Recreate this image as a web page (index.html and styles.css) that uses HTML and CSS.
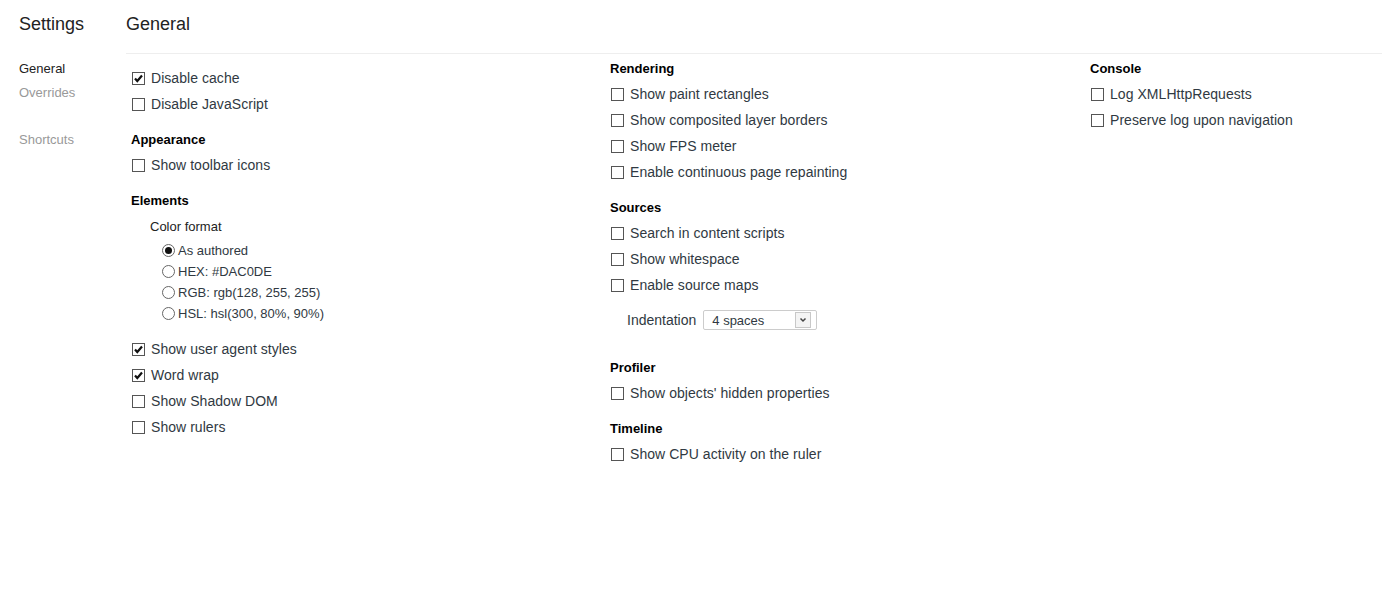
FILE: index.html
```html
<!DOCTYPE html>
<html>
<head>
<meta charset="utf-8">
<link rel="stylesheet" href="styles.css">
</head>
<body>
<div class="page">
  <aside class="sidebar">
    <h1 class="title">Settings</h1>
    <nav class="nav">
      <div class="nav-item active">General</div>
      <div class="nav-item">Overrides</div>
      <div class="nav-item nav-sep">Shortcuts</div>
    </nav>
  </aside>
  <main class="main">
    <h1 class="title main-title">General</h1>
    <div class="columns">
      <div class="col">
        <section class="section first">
          <label class="row"><span class="cb checked"><svg viewBox="0 0 11 11"><path d="M2 5.5 L4.3 8 L9 2.5" /></svg></span>Disable cache</label>
          <label class="row"><span class="cb"></span>Disable JavaScript</label>
        </section>
        <section class="section">
          <div class="head">Appearance</div>
          <label class="row"><span class="cb"></span>Show toolbar icons</label>
        </section>
        <section class="section">
          <div class="head">Elements</div>
          <div class="sub">Color format</div>
          <div class="radios">
            <label class="radio"><span class="rb checked"></span>As authored</label>
            <label class="radio"><span class="rb"></span>HEX: #DAC0DE</label>
            <label class="radio"><span class="rb"></span>RGB: rgb(128, 255, 255)</label>
            <label class="radio"><span class="rb"></span>HSL: hsl(300, 80%, 90%)</label>
          </div>
          <label class="row"><span class="cb checked"><svg viewBox="0 0 11 11"><path d="M2 5.5 L4.3 8 L9 2.5" /></svg></span>Show user agent styles</label>
          <label class="row"><span class="cb checked"><svg viewBox="0 0 11 11"><path d="M2 5.5 L4.3 8 L9 2.5" /></svg></span>Word wrap</label>
          <label class="row"><span class="cb"></span>Show Shadow DOM</label>
          <label class="row"><span class="cb"></span>Show rulers</label>
        </section>
      </div>
      <div class="col">
        <section class="section">
          <div class="head">Rendering</div>
          <label class="row"><span class="cb"></span>Show paint rectangles</label>
          <label class="row"><span class="cb"></span>Show composited layer borders</label>
          <label class="row"><span class="cb"></span>Show FPS meter</label>
          <label class="row"><span class="cb"></span>Enable continuous page repainting</label>
        </section>
        <section class="section">
          <div class="head">Sources</div>
          <label class="row"><span class="cb"></span>Search in content scripts</label>
          <label class="row"><span class="cb"></span>Show whitespace</label>
          <label class="row"><span class="cb"></span>Enable source maps</label>
          <div class="select-row">
            <span class="select-label">Indentation</span>
            <span class="select"><span class="select-value">4 spaces</span><span class="select-arrow"><svg viewBox="0 0 8 6"><path d="M1.5 1.5 L4 4 L6.5 1.5" /></svg></span></span>
          </div>
        </section>
        <section class="section">
          <div class="head">Profiler</div>
          <label class="row"><span class="cb"></span>Show objects' hidden properties</label>
        </section>
        <section class="section">
          <div class="head">Timeline</div>
          <label class="row"><span class="cb"></span>Show CPU activity on the ruler</label>
        </section>
      </div>
      <div class="col">
        <section class="section">
          <div class="head">Console</div>
          <label class="row"><span class="cb"></span>Log XMLHttpRequests</label>
          <label class="row"><span class="cb"></span>Preserve log upon navigation</label>
        </section>
      </div>
    </div>
  </main>
</div>
</body>
</html>
```

FILE: styles.css
```css
* { box-sizing: border-box; }
html, body { margin: 0; padding: 0; background: #fff; }
body {
  font-family: "Liberation Sans", Arial, sans-serif;
  color: #303942;
  font-size: 14px;
}
.page {
  display: flex;
  width: 1382px;
  min-height: 606px;
}
.sidebar {
  width: 126px;
  flex: none;
  padding-left: 19px;
}
.title {
  margin: 0;
  font-size: 18px;
  font-weight: normal;
  line-height: 22px;
  padding-top: 13px;
  color: #222;
}
.nav {
  padding-top: 22px;
}
.nav-item {
  font-size: 13px;
  line-height: 24px;
  color: #999;
}
.nav-item.active { color: #222; }
.nav-sep { margin-top: 23px; }

.main {
  flex: 1;
  min-width: 0;
}
.main-title {
  height: 54px;
  border-bottom: 1px solid #eee;
}
.columns {
  display: grid;
  grid-template-columns: 479px 480px 1fr;
  padding-left: 5px;
  padding-top: 1px;
}
.section {
  margin-bottom: 9px;
}
.section.first { padding-top: 10px; }
.head {
  font-weight: bold;
  font-size: 13px;
  line-height: 24px;
  padding-top: 2px;
  color: #000;
}
.row {
  display: flex;
  align-items: center;
  height: 26px;
  line-height: 26px;
  letter-spacing: 0.05px;
  padding-left: 1px;
}
.cb {
  width: 13px;
  height: 13px;
  border: 1px solid #555;
  background: #fff;
  margin-right: 6px;
  flex: none;
  display: flex;
  align-items: center;
  justify-content: center;
}
.cb svg { width: 11px; height: 11px; }
.cb path { fill: none; stroke: #111; stroke-width: 2.2; }
.sub {
  font-size: 13px;
  line-height: 26px;
  padding-top: 1px;
  padding-left: 19px;
  color: #222;
}
.radios {
  padding-left: 31px;
  margin-bottom: 12px;
}
.radio {
  display: flex;
  align-items: center;
  height: 21px;
  font-size: 13px;
}
.rb {
  width: 13px;
  height: 13px;
  border: 1px solid #666;
  border-radius: 50%;
  margin-right: 3px;
  position: relative;
  flex: none;
}
.rb.checked::after {
  content: "";
  position: absolute;
  left: 2px;
  top: 2px;
  width: 7px;
  height: 7px;
  border-radius: 50%;
  background: #111;
}
.select-row {
  display: flex;
  align-items: center;
  height: 26px;
  margin-top: 9px;
  margin-bottom: 21px;
  padding-left: 17px;
}
.select-label { margin-right: 7px; }
.select {
  display: flex;
  align-items: center;
  width: 114px;
  height: 20px;
  border: 1px solid #ccc;
  border-radius: 2px;
  font-size: 13px;
  padding-left: 8px;
  padding-right: 5px;
  background: #fff;
}
.select-value { flex: 1; }
.select-arrow {
  width: 16px;
  height: 16px;
  border: 1px solid #c8c8c8;
  background: #f4f4f4;
  display: flex;
  align-items: center;
  justify-content: center;
}
.select-arrow svg { width: 8px; height: 6px; }
.select-arrow path { fill: none; stroke: #444; stroke-width: 1.5; }
```
